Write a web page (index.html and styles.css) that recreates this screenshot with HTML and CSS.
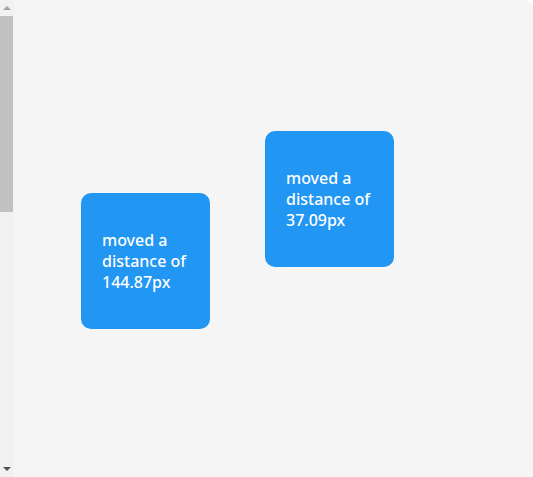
FILE: index.html
```html
<!DOCTYPE html>
<html>
<head>
<meta charset="utf-8">
<link rel="stylesheet" href="styles.css">
</head>
<body>
<div class="frame">
  <div class="scrollbar">
    <div class="arrow arrow-up"></div>
    <div class="thumb"></div>
    <div class="track"></div>
    <div class="arrow arrow-down"></div>
  </div>
  <div class="canvas">
    <div class="box box-a">moved a distance of 144.87px</div>
    <div class="box box-b">moved a distance of 37.09px</div>
  </div>
</div>
</body>
</html>
```
FILE: styles.css
```css
html, body {
  margin: 0;
  padding: 0;
  width: 533px;
  height: 477px;
  overflow: hidden;
  background: #ffffff;
}
.frame {
  display: flex;
  width: 533px;
  height: 477px;
  background: #f5f5f5;
  border-top-right-radius: 8px;
  overflow: hidden;
}
.scrollbar {
  width: 14px;
  flex: none;
  display: flex;
  flex-direction: column;
  background: #f1f1f1;
}
.arrow {
  height: 16px;
  flex: none;
  position: relative;
}
.arrow::after {
  content: "";
  position: absolute;
  left: 3px;
  width: 0;
  height: 0;
  border-left: 4px solid transparent;
  border-right: 4px solid transparent;
}
.arrow-up::after {
  top: 6px;
  border-bottom: 4px solid #a3a3a3;
}
.arrow-down::after {
  top: 6px;
  border-top: 4px solid #505050;
}
.thumb {
  height: 196px;
  width: 13px;
  flex: none;
  background: #c1c1c1;
}
.track {
  flex: 1;
}
.canvas {
  position: relative;
  flex: 1;
  font-family: "Noto Sans", "Open Sans", sans-serif;
}
.box {
  position: absolute;
  box-sizing: border-box;
  width: 129px;
  height: 136px;
  padding: 37px 18px 0 21px;
  background: #2196f3;
  border-radius: 10px;
  color: #ffffff;
  font-size: 16px;
  font-weight: 500;
  line-height: 21px;
}
.box-a {
  left: 67px;
  top: 193px;
}
.box-b {
  left: 251px;
  top: 131px;
}
```
